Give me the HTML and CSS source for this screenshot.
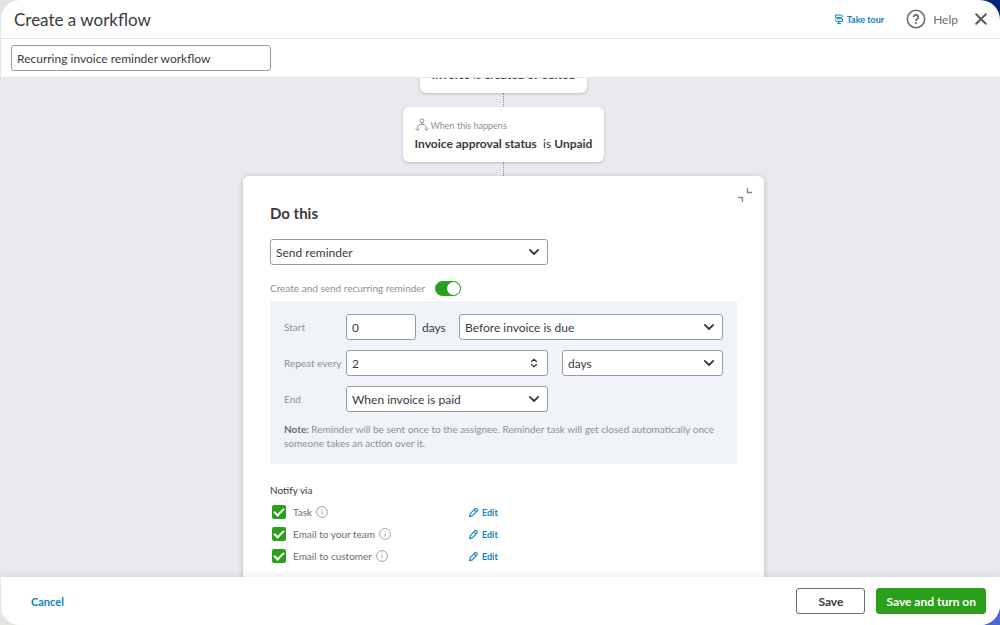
FILE: index.html
```html
<!DOCTYPE html>
<html lang="en">
<head>
<meta charset="utf-8">
<title>Create a workflow</title>
<link rel="stylesheet" href="styles.css">
</head>
<body>
<svg class="sprite" aria-hidden="true">
  <symbol id="chevron" viewBox="0 0 12 12"><path d="M1.800 3.900 6 8l4.200-4.100" fill="none" stroke="currentColor" stroke-width="1.800" stroke-linecap="round" stroke-linejoin="round"/></symbol>
  <symbol id="info" viewBox="0 0 12 12"><circle cx="6" cy="6" r="5.400" fill="none" stroke="currentColor" stroke-width="1"/><path d="M6 5.200v3.300" stroke="currentColor" stroke-width="1"/><circle cx="6" cy="3.600" r=".6" fill="currentColor"/></symbol>
  <symbol id="pencil" viewBox="0 0 12 12"><path d="M1.700 10.500 2.400 7.500 7.300 1.900Q8.300 1 9.600 2 10.800 3.100 9.900 4.300L4.800 9.700ZM6.500 3 8.900 5.300" fill="none" stroke="currentColor" stroke-width="1.200" stroke-linejoin="round"/></symbol>
</svg>
<div class="app">
  <header class="topbar">
    <h1 class="title">Create a workflow</h1>
    <a class="tour" href="#tour">
      <svg class="icon-tour" viewBox="0 0 10 10"><path d="M1.500 1h6l1.300 1.300-1.300 1.400h-6ZM8.500 4.800h-6L1.200 6.100l1.300 1.300h6ZM5 3.700v1.100M5 7.400v2M3 9.400h4" fill="none" stroke="currentColor" stroke-width="1" stroke-linejoin="round"/></svg>
      Take tour
    </a>
    <a class="help" href="#help">
      <svg class="icon-help" viewBox="0 0 20 20"><circle cx="10" cy="10" r="8.700" fill="none" stroke="currentColor" stroke-width="1.600"/><path d="M7.700 8.100a2.300 2.300 0 1 1 3.500 2C10.400 10.600 10 11 10 11.900" fill="none" stroke="currentColor" stroke-width="1.800"/><circle cx="10" cy="14.100" r="1.100" fill="currentColor"/></svg>
      Help
    </a>
    <button class="close" type="button" aria-label="Close">
      <svg class="icon-close" viewBox="0 0 12 12"><path d="m1.200 1.200 9.600 9.600M10.800 1.200 1.200 10.800" stroke="currentColor" stroke-width="2" stroke-linecap="round"/></svg>
    </button>
  </header>
  <div class="namebar">
    <input class="field name" type="text" aria-label="Workflow name" value="Recurring invoice reminder workflow">
  </div>
  <main class="canvas">
    <div class="flow">
      <section class="node node-trigger">
        <p class="condition"><b>Invoice</b> is <b>created or edited</b></p>
      </section>
      <div class="link"></div>
      <section class="node">
        <p class="when">
          <svg class="icon-branch" viewBox="0 0 14 14"><circle cx="7" cy="2.800" r="1.900"/><path d="M7 4.700v2M7 6.500C3.500 6.500 2.500 8 2.500 11.500M7 6.500c3.500 0 4.500 1.500 4.500 5M.7 10.500l1.800 2 1.900-2M9.600 10.500l1.900 2 1.800-2"/></svg>
          When this happens
        </p>
        <p class="condition"><b>Invoice approval status</b>&nbsp; is <b>Unpaid</b></p>
      </section>
      <div class="link"></div>
      <form class="panel">
        <div class="panel-head">
          <h2 class="heading">Do this</h2>
          <button class="collapse" type="button" aria-label="Collapse">
            <svg class="icon-collapse" viewBox="0 0 14 14"><path d="M9.500 0v4.500H14M0 9.500h4.500V14" fill="none" stroke="currentColor" stroke-width="1.300"/></svg>
          </button>
        </div>
        <div class="select action">
          <select class="field" aria-label="Action"><option>Send reminder</option></select>
          <svg class="chevron"><use href="#chevron"/></svg>
        </div>
        <div class="recurring">
          <label for="recurring">Create and send recurring reminder</label>
          <input class="toggle" id="recurring" type="checkbox" role="switch" checked>
        </div>
        <div class="schedule">
          <div class="row">
            <label class="label" for="start">Start</label>
            <input class="field start" id="start" type="text" value="0">
            <span class="unit">days</span>
            <div class="select grow">
              <select class="field" aria-label="Start relative to"><option>Before invoice is due</option></select>
              <svg class="chevron"><use href="#chevron"/></svg>
            </div>
          </div>
          <div class="row">
            <label class="label" for="repeat">Repeat every</label>
            <div class="select wide">
              <input class="field" id="repeat" type="text" inputmode="numeric" value="2">
              <svg class="chevron" viewBox="0 0 12 12"><path d="M3.500 4.500 6 2.200l2.500 2.300M3.500 7.500 6 9.800l2.500-2.300" fill="none" stroke="currentColor" stroke-width="1.200" stroke-linecap="round" stroke-linejoin="round"/></svg>
            </div>
            <div class="select grow period">
              <select class="field" aria-label="Repeat unit"><option>days</option></select>
              <svg class="chevron"><use href="#chevron"/></svg>
            </div>
          </div>
          <div class="row">
            <label class="label" for="end">End</label>
            <div class="select wide">
              <select class="field" id="end"><option>When invoice is paid</option></select>
              <svg class="chevron"><use href="#chevron"/></svg>
            </div>
          </div>
          <p class="note"><b>Note:</b> Reminder will be sent once to the assignee. Reminder task will get closed automatically once someone takes an action over it.</p>
        </div>
        <fieldset class="notify">
          <legend class="legend">Notify via</legend>
          <div class="channel">
            <input class="check" id="task" type="checkbox" checked>
            <div class="channel-name"><label for="task">Task</label><svg class="info"><use href="#info"/></svg></div>
            <a class="edit" href="#task"><svg class="pencil"><use href="#pencil"/></svg>Edit</a>
          </div>
          <div class="channel">
            <input class="check" id="team" type="checkbox" checked>
            <div class="channel-name"><label for="team">Email to your team</label><svg class="info"><use href="#info"/></svg></div>
            <a class="edit" href="#team"><svg class="pencil"><use href="#pencil"/></svg>Edit</a>
          </div>
          <div class="channel">
            <input class="check" id="customer" type="checkbox" checked>
            <div class="channel-name"><label for="customer">Email to customer</label><svg class="info"><use href="#info"/></svg></div>
            <a class="edit" href="#customer"><svg class="pencil"><use href="#pencil"/></svg>Edit</a>
          </div>
        </fieldset>
      </form>
    </div>
  </main>
  <footer class="actions">
    <a class="cancel" href="#cancel">Cancel</a>
    <button class="button" type="button">Save</button>
    <button class="button primary" type="button">Save and turn on</button>
  </footer>
</div>
</body>
</html>
```
FILE: styles.css
```css
* { box-sizing: border-box; }
body, h1, h2, p, fieldset { margin: 0; padding: 0; border: 0; }
body {
  background: linear-gradient(90deg, #e4e5e0 50%, transparent 50%), linear-gradient(#04247c 50%, #4a66d0 50%);
  color: #393a3d;
  font-family: Lato, "Liberation Sans", sans-serif;
  font-size: 12px;
}
button, input, select { font: inherit; color: inherit; }
button { padding: 0; border: 0; background: none; }
a { text-decoration: none; }
svg { display: block; flex: none; }
.sprite { position: absolute; width: 0; height: 0; }

.app {
  display: flex;
  flex-direction: column;
  height: 100vh;
  overflow: hidden;
  border: solid #e6e6e8;
  border-width: 0 0 0 1px;
  border-radius: 20px;
  background: #fff;
}

.topbar {
  display: flex;
  flex: none;
  align-items: center;
  height: 39px;
  padding: 0 13px;
  border-bottom: 1px solid #e3e4e6;
}
.title { flex: 1; font-size: 17px; font-weight: 400; }
.tour, .help { display: flex; align-items: center; }
.tour { gap: 3px; margin-right: 22px; color: #1080c4; font-size: 9px; font-weight: 700; }
.help { gap: 7px; margin-right: 17px; color: #6b6c72; }
.close { color: #5b5c61; }
.icon-tour { width: 10px; height: 10px; }
.icon-help { width: 20px; height: 20px; }
.icon-close { width: 12px; height: 12px; }

.namebar { flex: none; padding: 6px 10px; border-bottom: 1px solid #e6e6ea; }
.field {
  display: block;
  width: 100%;
  height: 26px;
  padding: 0 5px;
  border: 1px solid #9a9ca2;
  border-radius: 3px;
  background: #fff;
  appearance: none;
}
.field.name { width: 260px; }

.canvas { flex: 1; min-height: 0; overflow: hidden; background: #e9e9ee; }
.flow {
  display: flex;
  flex-direction: column;
  align-items: center;
  margin-top: -40px;
  padding-left: 6px;
}
.node {
  padding: 11px 12px;
  border-radius: 6px;
  background: #fff;
  box-shadow: 0 1px 3px rgb(60 60 80 / 25%);
}
.node-trigger { padding-top: 29px; }
.when { display: flex; align-items: center; gap: 2px; margin-bottom: 4px; color: #8d9096; font-size: 9px; }
.icon-branch { width: 14px; height: 14px; fill: none; stroke: currentColor; stroke-width: 1; }
.condition { line-height: 15px; }
.link { height: 14px; border-left: 1px dotted #8d9096; }

.panel {
  width: 521px;
  height: 480px;
  padding: 12px 27px;
  border-radius: 6px;
  background: #fff;
  box-shadow: 0 1px 5px rgb(60 60 80 / 30%);
}
.panel-head { display: flex; justify-content: space-between; align-items: flex-start; height: 51px; margin-right: -15px; }
.heading { padding-top: 15px; font-size: 15px; line-height: 20px; }
.collapse { color: #85868c; }
.icon-collapse { width: 14px; height: 14px; }

.select { display: grid; align-items: center; }
.select > * { grid-area: 1 / 1; }
.chevron { justify-self: end; width: 12px; height: 12px; margin-right: 8px; pointer-events: none; }
.action { width: 278px; }
.recurring { display: flex; align-items: center; gap: 10px; height: 36px; padding-top: 10px; color: #8d9096; font-size: 10px; }
.toggle {
  display: flex;
  justify-content: flex-end;
  width: 26px;
  height: 15px;
  margin: 0;
  border: 1px solid #2ca01c;
  border-radius: 8px;
  background: #2ca01c;
  appearance: none;
}
.toggle::before { content: ""; width: 13px; border-radius: 50%; background: #fff; }

.schedule {
  display: grid;
  gap: 10px;
  padding: 13px 14px 14px;
  background: #f0f4f8;
}
.row { display: flex; align-items: center; }
.label { width: 62px; color: #8d9096; font-size: 10px; white-space: nowrap; }
.field.start { width: 70px; }
.unit { width: 43px; padding-left: 6px; }
.wide { width: 202px; }
.grow { flex: 1; }
.period { margin-left: 14px; }
.note { color: #8d9096; font-size: 10px; line-height: 14px; }
.note b { color: #6b6c72; }

.notify { padding-top: 19px; font-size: 10px; }
.legend { float: left; width: 100%; padding: 0; line-height: 14px; margin-bottom: 4px; }
.channel { display: flex; clear: both; align-items: center; height: 22px; color: #6b6c72; }
.check {
  display: grid;
  place-items: center;
  width: 14px;
  height: 14px;
  margin: 0 7px 0 2px;
  border-radius: 2px;
  background: #2ca01c;
  appearance: none;
}
.check::before {
  content: "";
  width: 8px;
  height: 4px;
  margin-bottom: 2px;
  border: solid #fff;
  border-width: 0 0 2px 2px;
  rotate: -45deg;
}
.channel-name { display: flex; align-items: center; gap: 4px; width: 175px; }
.info { width: 12px; height: 12px; color: #a0a2a7; }
.edit { display: flex; align-items: center; gap: 3px; color: #1080c4; font-size: 9px; font-weight: 700; }
.pencil { width: 11px; height: 11px; }

.actions {
  display: flex;
  flex: none;
  align-items: center;
  gap: 11px;
  height: 48px;
  padding: 0 14px 0 30px;
  background: #fff;
  box-shadow: 0 0 8px rgb(60 60 80 / 15%);
}
.cancel { margin-right: auto; color: #1080c4; font-weight: 700; font-size: 11px; }
.button {
  height: 26px;
  padding: 0 21px;
  border: 1px solid #6b6c72;
  border-radius: 3px;
  font-weight: 700;
}
.primary { padding: 0 9px; border-color: #2ca01c; background: #2ca01c; color: #fff; }
```
